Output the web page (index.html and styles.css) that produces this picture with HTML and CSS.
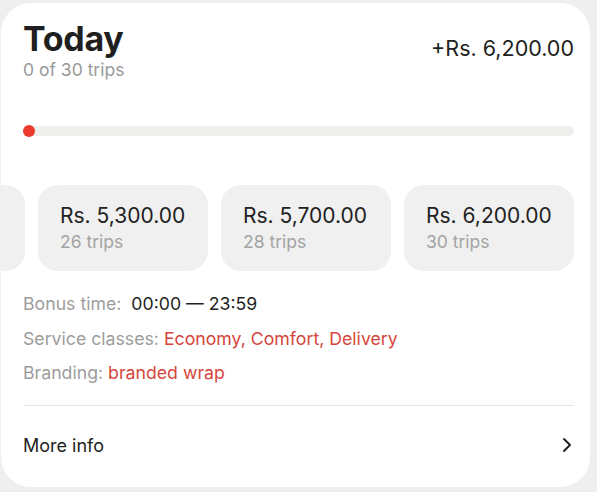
FILE: index.html
```html
<!DOCTYPE html>
<html>
<head>
<meta charset="utf-8">
<link rel="stylesheet" href="styles.css">
</head>
<body>
<div class="card">
  <div class="header">
    <div class="title-block">
      <div class="title">Today</div>
      <div class="subtitle">0 of 30 trips</div>
    </div>
    <div class="total">+Rs. 6,200.00</div>
  </div>
  <div class="progress"><span class="dot"></span></div>
  <div class="tiers">
    <div class="track">
      <div class="tier tier-peek"></div>
      <div class="tier"><div class="amount">Rs. 5,300.00</div><div class="trips">26 trips</div></div>
      <div class="tier"><div class="amount">Rs. 5,700.00</div><div class="trips">28 trips</div></div>
      <div class="tier"><div class="amount">Rs. 6,200.00</div><div class="trips">30 trips</div></div>
    </div>
  </div>
  <div class="details">
    <div class="row"><span class="label">Bonus time:&nbsp; </span><span class="value">00:00 — 23:59</span></div>
    <div class="row"><span class="label">Service classes: </span><span class="accent">Economy, Comfort, Delivery</span></div>
    <div class="row"><span class="label">Branding: </span><span class="accent">branded wrap</span></div>
  </div>
  <div class="divider"></div>
  <div class="more">
    <span>More info</span>
    <svg class="chev" width="10" height="16" viewBox="0 0 10 16"><path d="M2 2 L8 8 L2 14" fill="none" stroke="#1f1f1f" stroke-width="1.9" stroke-linecap="round" stroke-linejoin="round"/></svg>
  </div>
</div>
</body>
</html>
```
FILE: styles.css
```css
* { box-sizing: border-box; }
html, body { margin: 0; padding: 0; }
body {
  background: #efefef;
  font-family: Inter, "Noto Sans", sans-serif;
  color: #1f1f1f;
  width: 597px;
  height: 492px;
  overflow: hidden;
}
.card {
  margin: 3px 7px 0 1px;
  height: 484px;
  background: #fff;
  border-radius: 30px;
  padding: 17px 16px 0 22px;
  overflow: hidden;
}
.header {
  display: flex;
  justify-content: space-between;
  align-items: flex-start;
}
.title {
  font-size: 34px;
  font-weight: 700;
  line-height: 38px;
  letter-spacing: -0.3px;
}
.subtitle {
  margin-top: 2px;
  font-size: 17.5px;
  line-height: 20px;
  color: #9a9a9a;
}
.total {
  font-size: 21.5px;
  line-height: 26px;
  margin-top: 15px;
}
.progress {
  position: relative;
  margin-top: 46px;
  height: 10px;
  border-radius: 5px;
  background: #efefed;
}
.dot {
  position: absolute;
  left: 0;
  top: -1px;
  width: 12px;
  height: 12px;
  border-radius: 50%;
  background: #ee3b2f;
}
.tiers {
  margin-top: 49px;
  margin-left: -22px;
  margin-right: -16px;
  overflow: hidden;
}
.track {
  display: flex;
  gap: 13px;
  margin-left: -146px;
}
.tier {
  flex: 0 0 170px;
  height: 86px;
  border-radius: 20px;
  background: #f0f0f0;
  padding: 19px 0 0 22px;
}
.amount {
  font-size: 21px;
  line-height: 24px;
  color: #222;
}
.trips {
  margin-top: 3px;
  font-size: 17.5px;
  line-height: 22px;
  color: #a3a3a3;
}
.details {
  margin-top: 16px;
}
.row {
  font-size: 17.7px;
  line-height: 34.5px;
  white-space: pre;
}
.label { color: #9d9d9d; }
.value { color: #1f1f1f; }
.accent { color: #d5463c; }
.divider {
  margin-top: 14px;
  height: 1px;
  background: #e6e6e6;
}
.more {
  display: flex;
  justify-content: space-between;
  align-items: center;
  height: 79px;
  font-size: 18px;
  color: #222;
  padding-right: 2px;
}
.chev { display: block; }
```
